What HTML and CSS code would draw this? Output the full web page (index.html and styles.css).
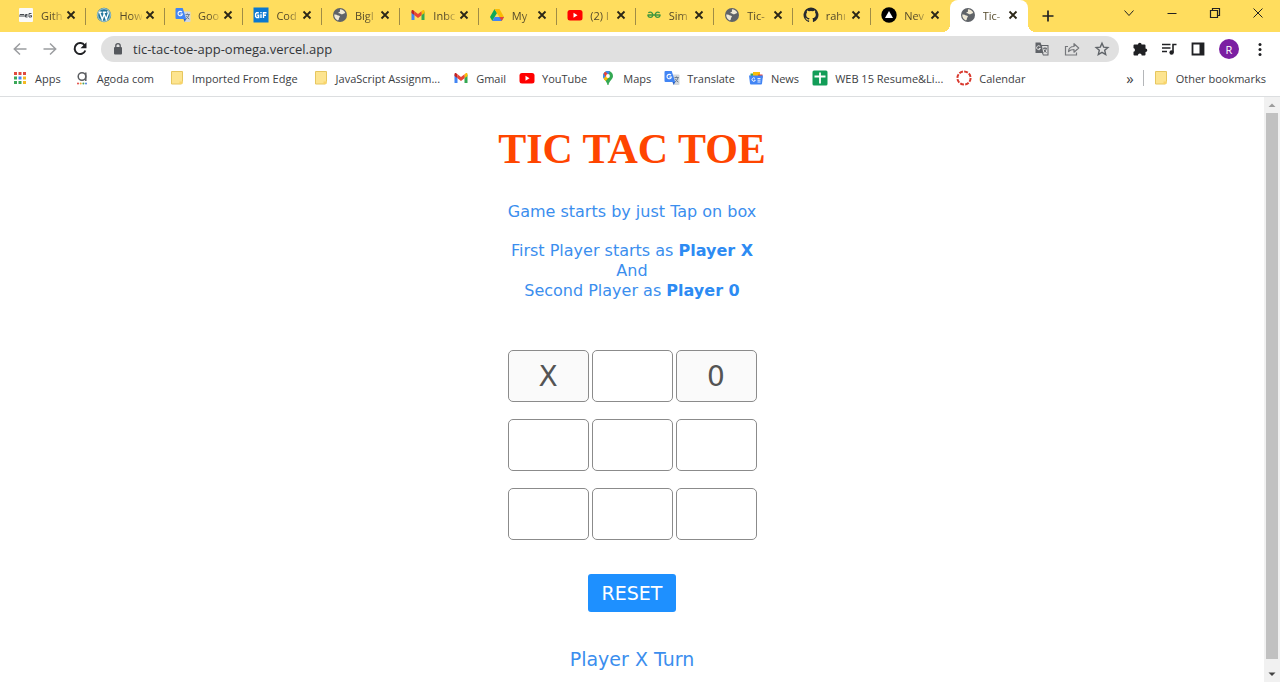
FILE: index.html
```html
<!DOCTYPE html>
<html lang="en">
<head>
<meta charset="utf-8">
<title>Tic-Tac-Toe</title>
<link rel="stylesheet" href="styles.css">
</head>
<body>
<svg class="sprite" aria-hidden="true">
  <symbol id="globe" viewBox="0 0 16 16"><circle cx="8" cy="8" r="7" fill="#5f6368"/><path d="M2.200 7.500c1.600-.3 2.800.2 3.700.900.900.1 1.900.2 2 1.200 0 .9-1 1-1 1.900 0 .8-.3 1.600-1 1.900C3.600 12.500 2.100 10.300 2.200 7.500zM8 2.300c2.300 0 4.300 1.300 5.200 3.400-.6.900-1.700.6-2.300 1.200-.7.700-1.800.5-2.500-.1-.6-.6-1.500-.3-1.900-.9-.2-.8.7-1 1.300-1.200.6-.4-.2-1.300.2-2.400z" fill="#efe9d6"/></symbol>
  <symbol id="close" viewBox="0 0 16 16"><path d="M4.500 4.500l7 7M11.500 4.500l-7 7" stroke="#2b2717" stroke-width="1.800" fill="none"/></symbol>
  <symbol id="gmail" viewBox="0 0 16 16"><path d="M1.500 4.500v8.500h3V6z" fill="#4285f4"/><path d="M14.500 4.500v8.500h-3V6z" fill="#34a853"/><path d="M11.500 4.200l1-.8c1-.700 2-.1 2 1v1.600l-3 2.300z" fill="#fbbc04"/><path d="M4.500 4.200l-1-.8c-1-.7-2-.1-2 1V6l3 2.300z" fill="#c5221f"/><path d="M4.500 4.200L8 6.900l3.500-2.700v4.100L8 11 4.500 8.300z" fill="#ea4335"/></symbol>
  <symbol id="youtube" viewBox="0 0 16 16"><rect x=".5" y="3" width="15" height="10.500" rx="2.500" fill="#f00"/><path d="M6.500 5.800v5l4-2.500z" fill="#fff"/></symbol>
  <symbol id="translate" viewBox="0 0 16 16"><path d="M6 4.500h8.500a1 1 0 0 1 1 1V14a1 1 0 0 1-1 1H9.500z" fill="#d3d7dc"/><path d="M1.500 1h6.200l3.500 11H1.500a1 1 0 0 1-1-1V2a1 1 0 0 1 1-1z" fill="#4285f4"/><path d="M11.200 12H8.500l1.200 3z" fill="#2860c4"/><path d="M7 5.200A2.200 2.200 0 1 0 7.400 7H5.300" stroke="#fff" stroke-width="1.100" fill="none"/><path d="M10.500 7.500h4.300M12.500 6.500v1M14 7.600c-.5 2-1.500 3.400-3 4.400M11.300 8.800c.6 1.500 1.600 2.500 3 3.300" stroke="#6f7f91" fill="none"/></symbol>
  <symbol id="folder" viewBox="0 0 16 16"><path d="M2.500 1.500h11v10l-1 2.500h-10z" fill="#fde48f" stroke="#e6c65e"/><path d="M10.500 14v-2.500h3V14z" fill="#f9d469"/></symbol>
</svg>

<header class="browser">
  <div class="tab-strip">
    <nav class="tabs" aria-label="Tabs">
      <div class="tab"><svg class="icon" viewBox="0 0 16 16"><rect x="1" y="1" width="14" height="14" rx="1" fill="#fafafa"/><path d="M2 10V7.500h4V10M4 7.500V10M9.500 7.500h-2V10h2M7.500 8.700h2M13.500 6.500h-2.500V10h2.500V8.500h-1.200" stroke="#474b50" fill="none"/></svg><span class="tab-title">Gith</span><button class="tab-close" aria-label="Close tab"><svg class="icon"><use href="#close"/></svg></button></div>
      <div class="tab"><svg class="icon" viewBox="0 0 16 16"><circle cx="8" cy="8" r="7.200" fill="#21759b"/><circle cx="8" cy="8" r="6.300" fill="none" stroke="#e8f1e9" stroke-width=".8"/><path d="M2.700 5.300h3M6.700 5.300h3.600M3.700 5.500l2.600 7 1.900-5.600M7.700 5.500l2.500 7 2-5.800c.3-1-.5-1.500-.4-2.600" stroke="#fff" stroke-width="1.400" fill="none"/></svg><span class="tab-title">How</span><button class="tab-close" aria-label="Close tab"><svg class="icon"><use href="#close"/></svg></button></div>
      <div class="tab"><svg class="icon"><use href="#translate"/></svg><span class="tab-title">Goo</span><button class="tab-close" aria-label="Close tab"><svg class="icon"><use href="#close"/></svg></button></div>
      <div class="tab"><svg class="icon" viewBox="0 0 16 16"><rect x=".5" y=".5" width="15" height="15" fill="#0a78d1"/><path d="M5.800 5.700H3.600l-1 1v2.800l1 1h2V8.300H4.300M8 7.300v3.700M8 5v1.200M10.500 11V5.700h3M10.500 8.300H13" stroke="#fff" stroke-width="1.400" fill="none"/></svg><span class="tab-title">Cod</span><button class="tab-close" aria-label="Close tab"><svg class="icon"><use href="#close"/></svg></button></div>
      <div class="tab"><svg class="icon"><use href="#globe"/></svg><span class="tab-title">BigI</span><button class="tab-close" aria-label="Close tab"><svg class="icon"><use href="#close"/></svg></button></div>
      <div class="tab"><svg class="icon"><use href="#gmail"/></svg><span class="tab-title">Inbc</span><button class="tab-close" aria-label="Close tab"><svg class="icon"><use href="#close"/></svg></button></div>
      <div class="tab"><svg class="icon" viewBox="0 0 16 16"><path d="M5.500 2L1 10l2.300 4L8 6z" fill="#0fa958"/><path d="M5.500 2h5L15 10h-4.700z" fill="#fbbc04"/><path d="M5.600 10H15l-2.300 4H3.300z" fill="#4285f4"/><path d="M10.300 10H15l-2.300 4z" fill="#ea4335"/></svg><span class="tab-title">My</span><button class="tab-close" aria-label="Close tab"><svg class="icon"><use href="#close"/></svg></button></div>
      <div class="tab"><svg class="icon"><use href="#youtube"/></svg><span class="tab-title">(2) l</span><button class="tab-close" aria-label="Close tab"><svg class="icon"><use href="#close"/></svg></button></div>
      <div class="tab"><svg class="icon" viewBox="0 0 16 16"><path d="M1.500 8h13M2.300 5.800c2-1.300 4.500-.4 4.500 2 0 3.300-4.500 3.500-5 .2M13.700 5.800c-2-1.300-4.500-.4-4.500 2 0 3.300 4.500 3.500 5 .2" stroke="#3f973f" stroke-width="1.300" fill="none"/></svg><span class="tab-title">Sim</span><button class="tab-close" aria-label="Close tab"><svg class="icon"><use href="#close"/></svg></button></div>
      <div class="tab"><svg class="icon"><use href="#globe"/></svg><span class="tab-title">Tic-</span><button class="tab-close" aria-label="Close tab"><svg class="icon"><use href="#close"/></svg></button></div>
      <div class="tab"><svg class="icon" viewBox="0 0 16 16"><path fill="#24292f" d="M8 .5a7.500 7.500 0 0 0-2.400 14.600c.4.100.5-.2.500-.4v-1.400c-2 .4-2.600-.9-2.600-.9-.4-.9-.9-1.100-.9-1.100-.7-.5.1-.5.1-.5.800.1 1.200.8 1.200.8.700 1.200 1.800.8 2.200.6.1-.5.300-.8.500-1-1.700-.2-3.400-.8-3.400-3.700 0-.8.300-1.500.8-2-.1-.2-.4-1 .1-2 0 0 .6-.2 2 .8a7 7 0 0 1 3.800 0c1.400-1 2-.8 2-.8.500 1 .2 1.800.1 2 .5.500.8 1.200.8 2 0 2.900-1.800 3.500-3.400 3.700.3.200.5.700.5 1.400v2.100c0 .2.100.5.500.4A7.500 7.500 0 0 0 8 .5z"/></svg><span class="tab-title">rahı</span><button class="tab-close" aria-label="Close tab"><svg class="icon"><use href="#close"/></svg></button></div>
      <div class="tab tab-last"><svg class="icon" viewBox="0 0 16 16"><circle cx="8" cy="8" r="7.700" fill="#000"/><path d="M8 4l4 7H4z" fill="#fff"/></svg><span class="tab-title">Nev</span><button class="tab-close" aria-label="Close tab"><svg class="icon"><use href="#close"/></svg></button></div>
      <div class="tab tab-active"><svg class="icon"><use href="#globe"/></svg><span class="tab-title">Tic-</span><button class="tab-close" aria-label="Close tab"><svg class="icon"><use href="#close"/></svg></button></div>
    </nav>
    <button class="new-tab" aria-label="New tab"><svg class="icon" viewBox="0 0 16 16"><path d="M8 2.500v11M2.500 8h11" stroke="#222" stroke-width="1.700"/></svg></button>
    <div class="window-controls">
      <button aria-label="Search tabs"><svg class="icon" viewBox="0 0 16 16"><path d="M3.500 5.500L8 10.500l4.500-5" fill="none" stroke="#222"/></svg></button>
      <button aria-label="Minimize"><svg class="icon" viewBox="0 0 16 16"><path d="M3.500 8.500h9" stroke="#222"/></svg></button>
      <button aria-label="Restore"><svg class="icon" viewBox="0 0 16 16"><path d="M3.500 5.500h7v7h-7zM5.500 5.500v-2h7v7h-2" fill="none" stroke="#222" stroke-width="1.200"/></svg></button>
      <button aria-label="Close"><svg class="icon" viewBox="0 0 16 16"><path d="M3.500 3.500l9 9M12.500 3.500l-9 9" stroke="#222"/></svg></button>
    </div>
  </div>

  <div class="toolbar">
    <div class="nav-buttons">
      <button aria-label="Back"><svg class="icon" viewBox="0 0 16 16"><path d="M14.500 8h-12M8 2.500L2.300 8 8 13.500" fill="none" stroke="#9b9da0" stroke-width="1.500"/></svg></button>
      <button aria-label="Forward"><svg class="icon" viewBox="0 0 16 16"><path d="M1.500 8h12M8 2.500L13.700 8 8 13.500" fill="none" stroke="#9b9da0" stroke-width="1.500"/></svg></button>
      <button aria-label="Reload"><svg class="icon" viewBox="0 0 16 16"><path d="M12.700 4.500A5.500 5.500 0 1 0 13.300 9.500" fill="none" stroke="#202124" stroke-width="2"/><path d="M14.500 1.200v6h-6z" fill="#202124"/></svg></button>
    </div>
    <div class="address">
      <svg class="icon" viewBox="0 0 16 16"><rect x="4" y="6" width="8" height="7.500" rx="1" fill="#55585d"/><path d="M5.800 6.500V4.800a2.200 2.200 0 0 1 4.400 0v1.700" fill="none" stroke="#55585d" stroke-width="1.300"/></svg>
      <input class="url" type="text" aria-label="Address" value="tic-tac-toe-app-omega.vercel.app">
      <button aria-label="Translate page"><svg class="icon" viewBox="0 0 16 16"><path d="M1.500 1.500h5l1 2.500h7v10.500H9l-1-2.500H1.500z" fill="#606368"/><path d="M8 5h5.500v8.500h-4z" fill="#e0e0e0"/><path d="M6.300 5.600A2 2 0 1 0 6.500 7.500H4.800" stroke="#e0e0e0" fill="none"/><path d="M9 7.300h4M11 6.300v1M12.400 7.500c-.4 1.800-1.300 3-2.600 4M10 8.500c.4 1.300 1.200 2.200 2.500 3" stroke="#606368" fill="none"/></svg></button>
      <button aria-label="Share"><svg class="icon" viewBox="0 0 16 16"><path d="M4 5.500H1.500v8.500h11v-2.500" fill="none" stroke="#75777b" stroke-width="1.200"/><path d="M4.500 10.500c.3-3.500 2-5 5.500-5V2.700l4.700 4.300-4.700 4.200V8.500C7.500 8.500 6 9 4.500 10.500z" fill="none" stroke="#75777b" stroke-width="1.200" stroke-linejoin="round"/></svg></button>
      <button aria-label="Bookmark this page"><svg class="icon" viewBox="0 0 16 16"><path d="M8 2.200l1.700 3.900 4.200.4-3.200 2.800 1 4.200L8 11.300l-3.700 2.200 1-4.200-3.200-2.800 4.200-.4z" fill="none" stroke="#5f6368" stroke-width="1.400"/></svg></button>
    </div>
    <div class="tools">
      <button aria-label="Extensions"><svg class="icon" viewBox="0 0 16 16"><path d="M6 3.500a1.800 1.800 0 0 1 3.600 0h2.900a1 1 0 0 1 1 1v3a1.800 1.800 0 0 1 0 3.600v2.400a1 1 0 0 1-1 1H9.700a1.900 1.900 0 0 0-3.800 0H2.500a1 1 0 0 1-1-1v-2.700a1.900 1.900 0 0 0 0-3.700V4.500a1 1 0 0 1 1-1z" fill="#202124"/></svg></button>
      <button aria-label="Media controls"><svg class="icon" viewBox="0 0 16 16"><path d="M1 3.500h8.500M1 7h8.500M1 10.500h5M12 11.500V3.500h3.500" fill="none" stroke="#202124" stroke-width="1.600"/><circle cx="10.600" cy="11.500" r="2.200" fill="#202124"/></svg></button>
      <button aria-label="Side panel"><svg class="icon" viewBox="0 0 16 16"><path d="M2.500 2.500h11v11h-11z" fill="none" stroke="#202124" stroke-width="1.800"/><path d="M9.500 2h4.500v12H9.500z" fill="#202124"/></svg></button>
      <button class="avatar" aria-label="Profile">R</button>
      <button aria-label="Menu"><svg class="icon" viewBox="0 0 16 16"><circle cx="8" cy="3.500" r="1.500" fill="#202124"/><circle cx="8" cy="8.500" r="1.500" fill="#202124"/><circle cx="8" cy="13.500" r="1.500" fill="#202124"/></svg></button>
    </div>
  </div>

  <nav class="bookmarks" aria-label="Bookmarks">
    <a href="#"><svg class="icon" viewBox="0 0 16 16"><path d="M2 2h3v3H2zM6.500 2h3v3h-3zM11 2h3v3h-3z" fill="#e04a3f"/><path d="M2 6.500h3v3H2z" fill="#3aa757"/><path d="M6.500 6.500h3v3h-3z" fill="#4285f4"/><path d="M11 6.500h3v3h-3zM11 11h3v3h-3z" fill="#f5b922"/><path d="M2 11h3v3H2zM6.500 11h3v3h-3z" fill="#3aa757"/></svg>Apps</a>
    <a href="#"><svg class="icon" viewBox="0 0 16 16"><circle cx="8" cy="6.500" r="3.800" fill="none" stroke="#5b5d61" stroke-width="1.500"/><path d="M11.800 2.500v8.500" stroke="#5b5d61" stroke-width="1.500"/><circle cx="4" cy="13.500" r="1" fill="#e14a47"/><circle cx="6.700" cy="13.500" r="1" fill="#f2ad35"/><circle cx="9.400" cy="13.500" r="1" fill="#4ba45c"/><circle cx="12" cy="13.500" r="1" fill="#5285df"/></svg>Agoda com</a>
    <a class="folder-link" href="#"><svg class="icon"><use href="#folder"/></svg>Imported From Edge</a>
    <a class="folder-link" href="#"><svg class="icon"><use href="#folder"/></svg>JavaScript Assignm...</a>
    <a href="#"><svg class="icon"><use href="#gmail"/></svg>Gmail</a>
    <a href="#"><svg class="icon"><use href="#youtube"/></svg>YouTube</a>
    <a href="#"><svg class="icon" viewBox="0 0 16 16"><path d="M8 1a5 5 0 0 0-5 5c0 3.500 4 5 4.500 9h1C9 11 13 9.500 13 6a5 5 0 0 0-5-5z" fill="#34a853"/><path d="M3.400 4A5 5 0 0 1 10 1.400L4.500 9.700C3 7.800 2.700 6 3.400 4z" fill="#4285f4"/><path d="M3.700 3.500A5 5 0 0 1 5.500 1.700L8 4.200 5.500 7z" fill="#ea4335"/><path d="M3.600 8.500l3-3.200 2 2.500-3 3.200c-.8-.8-1.500-1.600-2-2.500z" fill="#fbbc04"/><circle cx="8" cy="6" r="1.900" fill="#fff"/></svg>Maps</a>
    <a href="#"><svg class="icon"><use href="#translate"/></svg>Translate</a>
    <a href="#"><svg class="icon" viewBox="0 0 16 16"><path d="M2.500 3.500h5V7h-5z" fill="#34a853"/><path d="M5 2h7v4H5z" fill="#fbbc04"/><path d="M10 4.500h4.500V8H10z" fill="#ea4335"/><path d="M1 5.500h14l-1 8a1 1 0 0 1-1 1H3a1 1 0 0 1-1-1z" fill="#4285f4"/><path d="M7 8.500a1.700 1.700 0 1 0 .3 1.700H6M9.500 8.500h3M9.500 10.200h3M9.500 12h3" fill="none" stroke="#fff" stroke-width=".9"/></svg>News</a>
    <a href="#"><svg class="icon" viewBox="0 0 16 16"><rect x=".5" y=".5" width="15" height="15" rx="1.500" fill="#129d58"/><path d="M8 2.500v11M2.500 6.500h11" stroke="#fff" stroke-width="1.800"/></svg>WEB 15 Resume&amp;Li...</a>
    <a href="#"><svg class="icon" viewBox="0 0 16 16"><circle cx="8" cy="8" r="6.600" fill="none" stroke="#d93a2f" stroke-width="2" stroke-dasharray="3.900 1.280"/></svg>Calendar</a>
    <div class="bookmarks-end">
      <button class="more" aria-label="More bookmarks">»</button>
      <a href="#"><svg class="icon"><use href="#folder"/></svg>Other bookmarks</a>
    </div>
  </nav>
</header>

<div class="viewport">
  <main class="game">
    <h1>TIC TAC TOE</h1>
    <p class="intro">Game starts by just Tap on box</p>
    <p class="intro">First Player starts as <b>Player X</b><br>And<br>Second Player as <b>Player 0</b></p>
    <div class="board">
      <button class="cell played" disabled>X</button>
      <button class="cell" aria-label="Empty box"></button>
      <button class="cell played" disabled>0</button>
      <button class="cell" aria-label="Empty box"></button>
      <button class="cell" aria-label="Empty box"></button>
      <button class="cell" aria-label="Empty box"></button>
      <button class="cell" aria-label="Empty box"></button>
      <button class="cell" aria-label="Empty box"></button>
      <button class="cell" aria-label="Empty box"></button>
    </div>
    <button class="reset">RESET</button>
    <p class="turn">Player X Turn</p>
  </main>
  <div class="scrollbar" aria-hidden="true">
    <svg class="arrow" viewBox="0 0 16 16"><path d="M4.500 10L8 6.500l3.500 3.500z" fill="#9c9c9c"/></svg>
    <div class="thumb"></div>
    <svg class="arrow" viewBox="0 0 16 16"><path d="M4.500 6.500L8 10l3.500-3.500z" fill="#444"/></svg>
  </div>
</div>
</body>
</html>
```
FILE: styles.css
```css
* { box-sizing: border-box; }

body {
  margin: 0;
  height: 100vh;
  display: flex;
  flex-direction: column;
  background: #fff;
  font-family: "DejaVu Sans", Verdana, sans-serif;
}

button {
  margin: 0;
  padding: 0;
  border: 0;
  background: none;
  font: inherit;
  color: inherit;
}

.sprite { display: none; }

.icon {
  display: block;
  flex: none;
  width: 16px;
  height: 16px;
}

/* Browser frame */
.browser {
  flex: none;
  font-family: "Open Sans", "Noto Sans", sans-serif;
  font-size: 11px;
  color: #3c4043;
  border-bottom: 1px solid #dcdee0;
}

.tab-strip {
  display: flex;
  align-items: stretch;
  height: 32px;
  padding-left: 8px;
  background: #ffdd5e;
}

.tabs {
  display: flex;
  flex: 0 1 1020px;
  min-width: 0;
}

.tab {
  position: relative;
  display: flex;
  align-items: center;
  flex: 1 1 0;
  min-width: 0;
  padding: 0 7px 2px 10px;
}

.tab::after {
  content: "";
  position: absolute;
  right: 0;
  top: 8px;
  width: 1px;
  height: 17px;
  background: #a08c45;
}

.tab-last::after { display: none; }

.tab-title {
  flex: 1;
  min-width: 0;
  margin-left: 7px;
  white-space: nowrap;
  color: #54492a;
  mask-image: linear-gradient(to right, #000 50%, transparent 110%);
}

.tab-active {
  background: #fff;
  border-radius: 8px 8px 0 0;
}

.tab-active::before,
.tab-active::after {
  content: "";
  position: absolute;
  top: auto;
  bottom: 0;
  width: 8px;
  height: 8px;
}

.tab-active::before {
  left: -8px;
  background: radial-gradient(circle at 0 0, #ffdd5e 8px, #fff 8px);
}

.tab-active::after {
  right: -8px;
  background: radial-gradient(circle at 100% 0, #ffdd5e 8px, #fff 8px);
}

.new-tab { margin-left: 12px; }

.window-controls {
  display: flex;
  align-items: center;
  gap: 27px;
  margin-left: auto;
  padding: 0 14px 6px 0;
}

.toolbar {
  display: flex;
  align-items: center;
  gap: 13px;
  height: 34px;
  padding: 0 12px;
}

.nav-buttons {
  display: flex;
  gap: 14px;
}

.address {
  display: flex;
  align-items: center;
  flex: 1;
  gap: 14px;
  height: 26px;
  padding: 0 9px;
  border-radius: 13px;
  background: #e0e0e0;
}

.url {
  flex: 1;
  min-width: 0;
  margin-left: -7px;
  padding: 0;
  border: 0;
  outline: 0;
  background: none;
  color: #33363a;
  font: 13px "Open Sans", "Noto Sans", sans-serif;
}

.tools {
  display: flex;
  align-items: center;
  gap: 13px;
}

.avatar {
  width: 20px;
  height: 20px;
  border-radius: 50%;
  background: #7b1fa2;
  color: #fff;
}

.bookmarks {
  display: flex;
  align-items: center;
  gap: 13px;
  height: 30px;
  padding: 0 14px 6px 12px;
}

.bookmarks a {
  display: flex;
  align-items: center;
  gap: 7px;
  color: inherit;
  text-decoration: none;
  white-space: nowrap;
}

.bookmarks .folder-link { margin-left: 2px; }

.bookmarks-end {
  display: flex;
  align-items: center;
  gap: 9px;
  margin-left: auto;
}

.bookmarks-end a {
  padding-left: 9px;
  border-left: 1px solid #b4b6b9;
}

.more { font-size: 15px; }

/* Page */
.viewport {
  display: flex;
  flex: 1;
  min-height: 0;
}

.game {
  display: flex;
  flex: 1;
  flex-direction: column;
  align-items: center;
  padding-top: 28px;
  overflow: hidden;
  color: #3b8eee;
  text-align: center;
}

.game h1 {
  margin: 0 0 10px;
  color: #ff4500;
  font: bold 42px/48px "Liberation Serif", "Times New Roman", serif;
}

.intro {
  margin: 19px 0 0;
  font-size: 16px;
  line-height: 20px;
}

.intro b { color: #2d8bf3; }

.board {
  display: grid;
  grid-template-columns: repeat(3, 81px);
  gap: 17px 3px;
  margin-top: 49px;
}

.cell {
  height: 52px;
  border: 1px solid #8b8b8b;
  border-radius: 5px;
  background: #fff;
  color: #545454;
  font-size: 28px;
}

.played { background: #fafafa; }

.reset {
  flex: none;
  margin-top: 34px;
  padding: 0 14px;
  border-radius: 3px;
  background: #1e90ff;
  color: #fff;
  font-size: 19px;
  line-height: 38px;
}

.turn {
  margin: 35px 0 0;
  font-size: 19px;
  line-height: 24px;
}

.scrollbar {
  display: flex;
  flex: none;
  flex-direction: column;
  width: 16px;
  background: #f1f1f1;
}

.arrow {
  display: block;
  flex: none;
  width: 16px;
  height: 16px;
}

.thumb {
  flex: 1;
  margin: 0 2px 7px;
  background: #c1c1c1;
}
```
